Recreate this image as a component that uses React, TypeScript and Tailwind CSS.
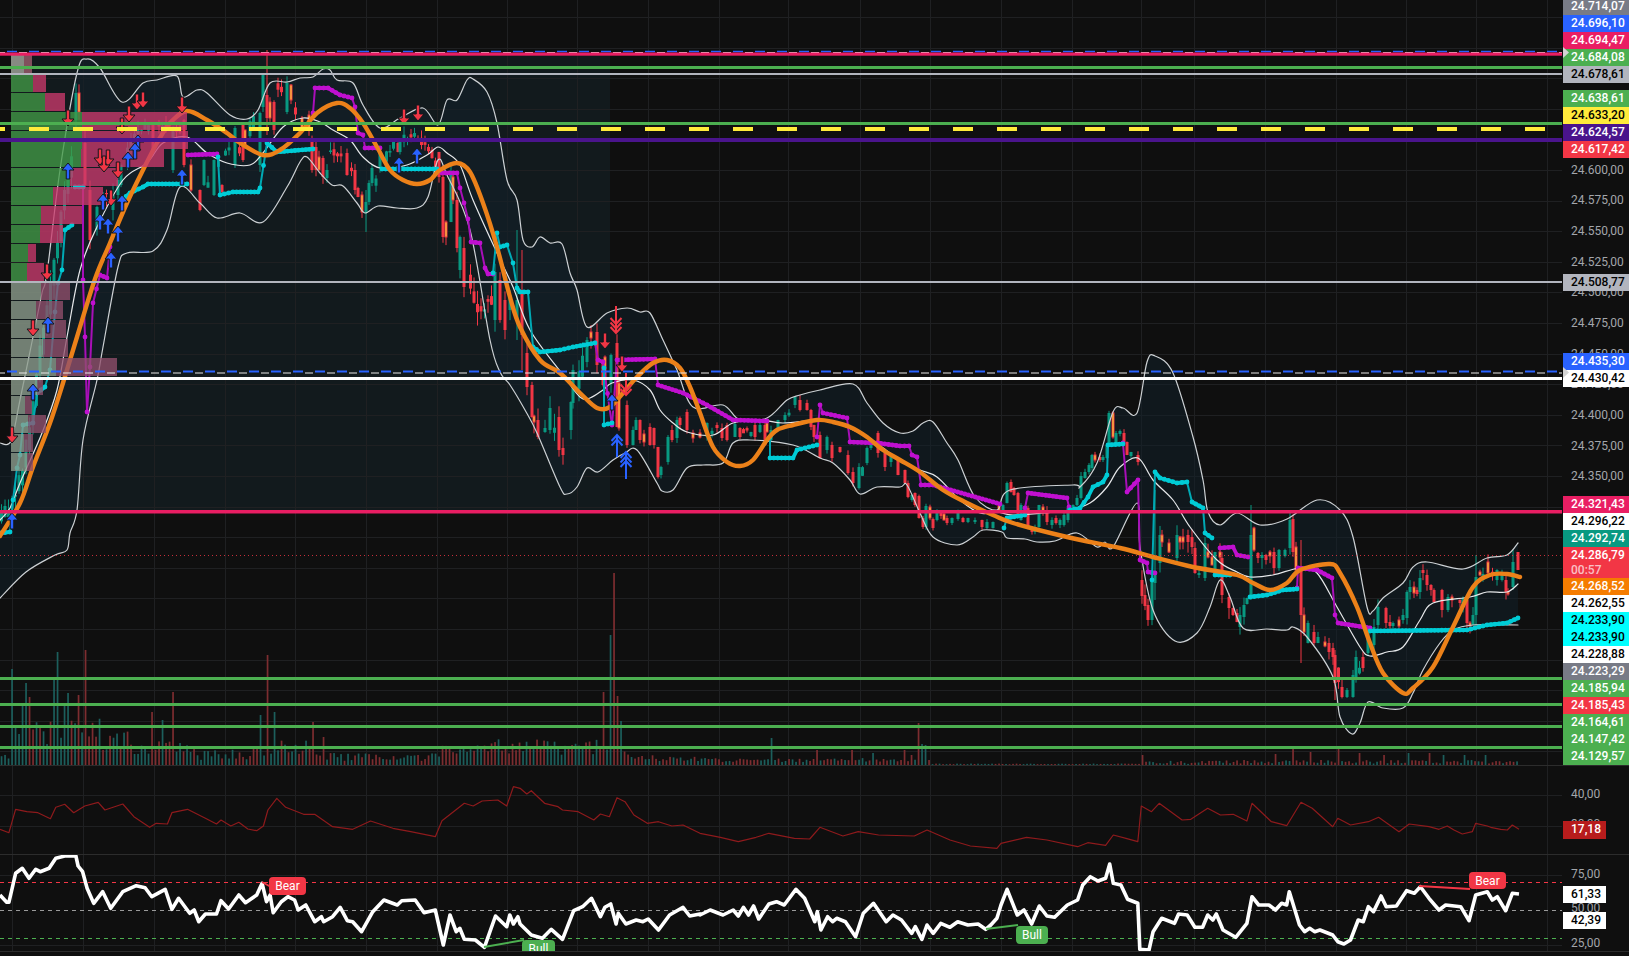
import React from "react";

type P = number[];

// seeded noise so the candles stay the same on every render
let seed = 42;
const rnd = () => {
  seed = (seed * 1664525 + 1013904223) % 4294967296;
  return seed / 4294967296;
};

const smooth = (p: P[]) => {
  let d = `M${p[0][0]} ${p[0][1]}`;
  for (let i = 0; i < p.length - 1; i++) {
    const a = p[Math.max(i - 1, 0)], b = p[i], c = p[i + 1], e = p[Math.min(i + 2, p.length - 1)];
    d += `C${(b[0] + (c[0] - a[0]) / 6).toFixed(1)} ${(b[1] + (c[1] - a[1]) / 6).toFixed(1)} ${(c[0] - (e[0] - b[0]) / 6).toFixed(1)} ${(c[1] - (e[1] - b[1]) / 6).toFixed(1)} ${c[0]} ${c[1]}`;
  }
  return d;
};
const line = (p: P[]) => "M" + p.map((q) => `${q[0].toFixed(1)} ${q[1].toFixed(1)}`).join("L");

// one dot per bar along a step line, so steep legs stay thin
const barDots = (s: P[]) => {
  const out: P[] = [];
  for (let i = 0; i < s.length - 1; i++) {
    const [x1, y1] = s[i], [x2, y2] = s[i + 1];
    const n = Math.max(1, Math.floor((x2 - x1) / 3.5));
    for (let j = 0; j < n; j++) out.push([x1 + ((x2 - x1) * j) / n, y1 + ((y2 - y1) * j) / n]);
  }
  out.push(s[s.length - 1]);
  return out;
};

const orange: P[] = [[0,536],[20,503],[33,467],[50,423],[63,383],[77,337],[95,279],[110,243],[127,203],[143,170],[157,143],[170,123],[187,111],[207,120],[227,133],[240,143],[263,155],[280,150],[300,133],[317,113],[337,103],[350,108],[363,123],[377,147],[390,170],[403,180],[417,184],[430,180],[440,170],[457,163],[470,172],[483,203],[497,247],[510,297],[520,327],[540,360],[560,373],[580,393],[597,408],[610,407],[623,393],[637,377],[653,363],[667,360],[680,368],[690,387],[700,413],[713,447],[727,462],[740,466],[753,460],[767,440],[777,430],[793,425],[817,420],[833,422],[850,427],[867,437],[883,450],[900,460],[920,472],[943,490],[967,503],[993,515],[1013,523],[1067,537],[1120,548],[1153,557],[1193,567],[1237,575],[1253,583],[1270,590],[1287,583],[1300,570],[1330,564],[1340,573],[1357,607],[1370,643],[1383,673],[1403,693],[1413,688],[1433,667],[1453,627],[1473,587],[1490,575],[1507,574],[1520,577]];
const upper: P[] = [[0,443],[11,441],[20,400],[33,337],[42,293],[47,273],[60,170],[77,73],[87,59],[100,68],[122,102],[143,83],[157,80],[177,76],[183,97],[197,90],[207,93],[230,115],[247,119],[258,110],[270,83],[287,82],[300,78],[313,77],[323,69],[330,70],[337,80],[353,83],[363,105],[380,128],[400,118],[423,108],[438,125],[447,100],[457,100],[467,80],[473,79],[487,92],[497,123],[507,180],[517,200],[523,240],[532,247],[540,237],[550,243],[562,244],[570,273],[577,290],[587,327],[607,313],[627,308],[640,312],[650,313],[663,340],[677,370],[693,407],[723,405],[740,420],[767,418],[787,400],[800,395],[820,390],[853,384],[867,403],[883,423],[900,433],[913,431],[923,423],[933,422],[947,443],[958,460],[975,497],[997,510],[1010,490],[1073,485],[1080,487],[1097,463],[1113,412],[1123,408],[1137,413],[1147,362],[1155,356],[1173,373],[1193,437],[1203,480],[1208,512],[1220,525],[1237,513],[1260,525],[1287,519],[1317,500],[1340,510],[1353,537],[1367,607],[1373,611],[1383,598],[1403,583],[1413,567],[1427,562],[1463,569],[1487,558],[1507,555],[1518,543]];
const lower: P[] = [[0,598],[26,572],[55,555],[67,550],[70,533],[77,510],[83,440],[97,380],[103,347],[118,267],[127,253],[153,251],[167,230],[180,187],[200,203],[217,218],[240,213],[263,222],[287,187],[300,162],[307,157],[320,173],[332,185],[343,186],[357,203],[365,213],[378,206],[397,208],[417,208],[428,197],[438,160],[447,175],[470,230],[490,340],[500,372],[510,385],[525,410],[537,433],[560,487],[567,494],[577,487],[587,468],[598,472],[613,460],[625,453],[637,450],[657,483],[662,491],[673,490],[687,468],[703,465],[723,463],[733,443],[750,440],[793,445],[820,458],[833,463],[850,480],[860,494],[877,487],[900,487],[907,485],[920,513],[933,537],[957,545],[973,537],[983,530],[1002,532],[1007,538],[1025,539],[1037,542],[1055,541],[1077,533],[1097,547],[1105,542],[1113,547],[1137,503],[1140,547],[1153,610],[1175,641],[1197,633],[1210,607],[1220,580],[1230,597],[1243,628],[1267,629],[1287,630],[1293,627],[1307,637],[1333,677],[1340,717],[1352,734],[1360,723],[1368,702],[1383,708],[1403,708],[1413,693],[1423,670],[1440,643],[1453,630],[1473,625],[1518,625]];
const mid: P[] = [[0,520],[10,508],[20,483],[42,433],[57,390],[67,337],[80,270],[97,227],[123,180],[147,163],[163,143],[187,137],[207,153],[227,163],[250,165],[263,153],[283,127],[303,118],[320,122],[333,130],[350,140],[363,157],[380,168],[407,165],[427,155],[438,147],[447,153],[460,165],[473,200],[497,253],[513,287],[530,330],[563,375],[580,397],[590,398],[603,390],[612,383],[633,380],[650,390],[660,410],[673,423],[687,432],[713,435],[733,423],[760,420],[783,423],[817,420],[833,422],[867,437],[900,460],[920,470],[937,477],[960,500],[980,513],[997,512],[1013,515],[1043,513],[1070,510],[1090,503],[1107,487],[1120,467],[1138,458],[1153,480],[1173,500],[1190,527],[1217,560],[1237,572],[1250,577],[1273,575],[1300,568],[1317,573],[1337,607],[1360,647],[1370,656],[1387,652],[1403,647],[1420,620],[1433,603],[1470,597],[1487,592],[1507,592],[1518,584]];

const magenta: P[][] = [
  [[83,187],[83,280],[85,337],[87,412],[90,367],[93,303],[100,275],[107,278],[110,247]],
  [[188,155],[217,154]],
  [[313,113],[315,88],[328,88],[340,95],[352,98],[355,107],[358,133],[363,135],[365,148],[380,148]],
  [[442,173],[457,173],[460,188],[464,203],[468,219],[471,242],[480,243],[485,268],[488,274],[493,274]],
  [[595,343],[598,360],[603,362],[612,425],[617,360],[655,359],[658,385],[683,393],[707,405],[733,420],[767,421]],
  [[817,437],[820,405],[823,413],[847,418],[850,442],[877,443],[900,446],[909,446],[912,455],[917,457],[921,485],[933,485],[1000,504]],
  [[1025,508],[1028,493],[1067,498],[1069,507]],
  [[1123,443],[1127,492],[1138,480],[1140,560],[1147,563],[1148,572],[1155,573]],
  [[1220,548],[1233,547],[1237,555],[1248,557]],
  [[1297,588],[1298,568],[1317,570],[1332,578],[1335,615],[1338,623],[1370,628]],
];
const cyan: P[][] = [
  [[0,533],[10,532],[13,500],[17,468],[20,455],[23,425],[33,423],[37,393],[45,387],[50,370],[55,312],[58,283],[62,270],[65,230],[72,225]],
  [[75,187],[83,187]],
  [[122,200],[130,193],[143,187],[148,184],[187,184]],
  [[218,157],[220,195],[233,192],[258,192],[260,188],[267,143],[277,152],[313,149]],
  [[382,169],[437,169]],
  [[493,273],[497,233],[500,247],[507,245],[513,263],[517,288],[520,292],[528,292],[533,347],[540,352],[560,350],[573,347],[595,343]],
  [[604,368],[604,425],[612,423]],
  [[770,437],[770,458],[793,458],[797,450],[817,445]],
  [[1004,528],[1007,518],[1025,515]],
  [[1070,510],[1080,508],[1088,497],[1093,487],[1103,482],[1107,475],[1108,445],[1123,444]],
  [[1152,580],[1155,472],[1160,478],[1177,483],[1187,482],[1192,502],[1203,508],[1205,533],[1212,538]],
  [[1215,575],[1230,575]],
  [[1250,597],[1267,595],[1283,590],[1297,589]],
  [[1370,631],[1467,630],[1487,625],[1507,623],[1518,618]],
];

const pricePath: P[] = [[0,520],[12,500],[22,470],[30,420],[40,350],[50,290],[60,220],[70,160],[80,110],[88,150],[95,210],[105,190],[120,170],[135,130],[150,125],[165,125],[180,130],[188,160],[195,175],[205,185],[215,165],[225,150],[240,150],[255,110],[265,80],[280,90],[295,110],[310,135],[325,150],[340,155],[355,175],[365,205],[380,165],[395,140],[415,135],[430,150],[440,190],[450,230],[465,270],[475,310],[490,300],[517,307],[533,418],[543,433],[558,423],[563,453],[572,410],[583,353],[593,343],[603,373],[617,387],[625,423],[633,433],[647,433],[660,463],[670,447],[677,423],[690,433],[707,433],[727,430],[747,430],[767,427],[787,413],[800,398],[810,417],[820,450],[833,447],[850,467],[857,483],[867,453],[880,440],[887,467],[900,477],[910,487],[920,513],[930,517],[943,515],[967,518],[987,527],[1003,507],[1010,487],[1020,510],[1030,528],[1040,517],[1053,523],[1067,513],[1080,497],[1093,460],[1110,427],[1117,437],[1130,453],[1138,458],[1150,607],[1153,580],[1162,547],[1168,553],[1177,547],[1187,538],[1193,557],[1203,570],[1213,557],[1223,580],[1233,607],[1243,610],[1252,570],[1258,553],[1270,555],[1280,557],[1290,530],[1297,553],[1302,613],[1310,630],[1320,640],[1333,657],[1337,683],[1347,693],[1353,683],[1363,660],[1373,630],[1380,610],[1387,620],[1400,620],[1407,593],[1413,588],[1423,573],[1435,597],[1447,603],[1460,600],[1467,620],[1477,587],[1490,570],[1500,577],[1508,593],[1513,567],[1518,555]];

// x, body top, body bottom, kind (g green, r red, y yellow core), optional wick top / bottom
const big: (number | string)[][] = [
  [76,93,120,"g"],[79,93,112,"y"],[85,143,185,"r"],[90,190,240,"r"],[97,207,230,"g"],[113,195,210,"g"],[118,180,195,"g"],[121,165,185,"g"],[153,125,150,"r"],[173,128,170,"g"],[184,120,165,"r"],[191,165,190,"y"],[200,190,210,"r"],[204,160,185,"g"],[214,160,195,"g"],[222,185,192,"r"],[235,128,165,"g"],[243,125,160,"r"],[245,130,145,"y"],[260,113,165,"g"],[263,75,107,"g"],[267,95,118,"r",50,135],[270,102,118,"y"],[274,102,130,"r"],[291,85,100,"y"],[287,83,112,"g"],
  [302,118,130,"y"],[309,115,130,"y"],[312,142,170,"r"],[316,147,170,"r"],[319,157,170,"y"],[323,158,177,"r"],[327,170,178,"g"],[347,153,175,"r"],[355,170,190,"r"],[358,188,197,"r"],[362,195,212,"y"],[366,202,213,"g",190,232],[369,183,202,"g"],[372,168,183,"g"],[380,152,168,"g"],[398,143,152,"r"],[400,142,152,"g"],
  [439,152,177,"r"],[443,177,237,"r"],[446,222,237,"y"],[451,173,222,"g"],[453,177,200,"y"],[457,200,248,"r"],[460,237,270,"g"],[464,248,287,"r"],
  [495,272,320,"g"],[500,280,320,"r"],[505,300,330,"r"],[510,295,310,"g"],[517,300,320,"g",230,340],[522,290,335,"r",250,370],[527,353,387,"r"],[532,385,417,"r"],[538,420,437,"r"],[534,416,422,"y"],[545,428,432,"g"],[550,408,430,"g"],[559,417,450,"r"],[563,448,455,"r"],[571,402,430,"g"],[573,370,403,"g"],[587,340,362,"g"],[591,332,338,"y"],[597,332,365,"r"],[603,363,385,"r"],[605,357,383,"y"],[611,355,383,"g"],[617,343,427,"r"],[619,383,428,"y"],[627,405,445,"r"],[633,430,445,"g"],[636,420,430,"g"],[640,420,440,"r"],[644,434,442,"y"],[650,427,445,"r"],[654,428,445,"r"],[658,447,477,"r"],[661,467,475,"g"],[668,437,462,"g"],[672,430,440,"r"],[677,420,438,"g"],[680,418,425,"r"],[687,412,430,"r"],[693,433,438,"y"],[700,433,437,"y"],[707,423,437,"g"],[717,425,428,"r"],[722,428,438,"r"],[727,425,440,"r"],[735,424,437,"g"],[740,428,437,"r"],[751,432,436,"g"],[755,425,437,"r"],[760,425,432,"g"],[765,425,445,"r"],[767,423,432,"y"],[771,430,440,"g"],[778,420,430,"g"],[785,415,420,"g"],[795,397,405,"g"],[800,400,410,"r"],[807,403,410,"r"],[811,410,427,"r"],[814,425,437,"r"],[820,435,458,"r"],[827,437,450,"g"],[832,445,458,"r"],[840,447,452,"r"],[848,455,473,"r"],[853,472,483,"r"],[859,467,488,"g"],[867,448,463,"g"],[871,442,448,"g"],[878,433,453,"r"],[885,453,467,"r"],[891,455,462,"g"],[898,460,475,"r"],[905,470,483,"r"],[908,483,497,"r"],[912,495,500,"g"],[915,493,505,"r"],[919,496,518,"r"],[923,518,527,"r"],[926,506,527,"g"],[930,507,518,"y"],[933,519,528,"r"],[937,512,520,"g"],[941,512,516,"r"],[944,514,520,"y"],[947,518,523,"r"],[952,518,523,"g"],[958,512,519,"g"],[963,518,522,"r"],[968,518,522,"g"],[975,520,522,"g"],[982,520,527,"r"],[987,522,528,"g"],[993,522,528,"g"],[999,504,512,"y"],[1003,505,510,"g"],[1007,483,503,"g"],[1011,482,492,"r"],[1014,488,495,"r"],[1018,493,515,"r"],[1021,505,520,"g"],[1028,508,527,"r"],[1032,528,532,"r"],[1035,527,532,"g"],[1039,505,527,"g"],[1043,507,512,"y"],[1047,510,522,"r"],[1052,520,525,"g"],[1056,518,523,"r"],[1060,520,525,"g"],[1064,515,525,"g"],[1068,508,520,"g"],[1073,505,510,"g"],[1077,498,505,"g"],[1081,476,498,"g"],[1085,472,478,"g"],[1089,465,472,"g"],[1092,455,468,"g"],[1095,455,460,"y"],[1100,457,460,"r"],[1103,457,460,"g"],[1107,445,458,"g"],[1109,413,443,"g"],[1113,413,437,"y"],[1116,433,443,"g"],[1120,431,434,"g"],[1124,433,442,"r"],[1127,442,455,"r"],[1131,452,456,"g"],[1138,455,462,"r"],
  [1142,580,596,"r"],[1145,595,606,"r"],[1148,605,620,"r"],[1152,580,620,"g"],[1155,573,583,"g",490,600],[1160,535,563,"g"],[1162,535,542,"y"],[1169,543,552,"y"],[1177,535,558,"g"],[1180,537,542,"y"],[1183,537,542,"y"],[1188,535,542,"r"],[1192,537,547,"r"],[1195,548,573,"r"],[1199,573,575,"g"],[1205,543,578,"g"],[1208,552,557,"y"],[1212,557,565,"y"],[1215,552,570,"g"],[1220,552,557,"y"],[1222,558,595,"r"],[1229,597,608,"r"],[1233,608,615,"r"],[1237,613,622,"r"],[1240,615,627,"g"],[1244,605,617,"g"],[1247,598,604,"g"],[1251,535,596,"g",505,600],[1254,528,550,"y"],[1258,553,558,"r"],[1262,555,558,"g"],[1266,555,560,"r"],[1270,552,556,"y"],[1274,552,568,"r"],[1279,550,568,"g"],[1285,550,556,"g"],[1290,520,548,"g"],[1293,519,552,"r"],[1296,547,570,"y"],[1301,570,615,"r",540,663],[1304,615,632,"y"],[1308,623,643,"g"],[1314,632,643,"r"],[1318,637,643,"g"],[1325,642,646,"y"],[1329,643,652,"r"],[1333,648,657,"r"],[1335,655,683,"r",650,700],[1342,687,697,"r"],[1347,690,697,"g"],[1353,675,697,"g"],[1356,657,677,"g"],[1363,657,668,"r"],[1368,632,653,"g"],[1374,627,645,"g"],[1378,607,625,"g"],[1386,608,623,"r"],[1390,622,626,"r"],[1393,623,626,"g"],[1399,620,626,"y"],[1403,615,620,"g"],[1407,592,618,"g"],[1410,587,592,"g"],[1414,587,593,"y"],[1417,590,594,"r"],[1420,578,592,"g"],[1423,570,573,"r"],[1427,575,585,"r"],[1431,585,590,"r"],[1434,590,602,"r"],[1442,590,610,"r"],[1448,597,610,"g"],[1452,597,600,"y"],[1460,600,603,"r"],[1463,598,606,"g"],[1467,600,623,"r"],[1470,623,626,"y"],[1473,615,625,"g"],[1476,577,615,"g",555,625],[1480,572,575,"y"],[1483,574,580,"g"],[1488,562,573,"y"],[1497,570,580,"g"],[1502,573,580,"g"],[1506,580,592,"r"],[1508,592,594,"y"],[1513,562,587,"g",550,590],[1518,552,570,"r",552,568],
];

const at = (x: number) => {
  for (let i = 0; i < pricePath.length - 1; i++) {
    if (x <= pricePath[i + 1][0]) {
      const a = pricePath[i], b = pricePath[i + 1];
      return a[1] + ((b[1] - a[1]) * (x - a[0])) / (b[0] - a[0]);
    }
  }
  return pricePath[pricePath.length - 1][1];
};
const amp = (x: number) => (x < 130 ? 12 : x < 440 ? 7 : x < 620 ? 12 : x < 900 ? 5 : x < 1040 ? 3 : x < 1140 ? 4 : x < 1300 ? 11 : 8);

type Candle = { x: number; t: number; b: number; k: string; wt: number; wb: number };
const candles: Candle[] = [];
const bigXs = big.map((b) => b[0] as number);
for (let i = 0; i < 434; i++) {
  const x = 1.5 + i * 3.5;
  const a = amp(x);
  const o = at(x - 3.5) + (rnd() - 0.5) * a;
  const c = at(x) + (rnd() - 0.5) * a;
  const wt = Math.min(o, c) - rnd() * a * 1.2;
  const wb = Math.max(o, c) + rnd() * a * 1.2;
  if (x > 1141 && x < 1151) continue;
  if (bigXs.some((m) => Math.abs(m - x) < 3.2)) continue;
  candles.push({ x, t: Math.min(o, c), b: Math.max(o, c) + 1, k: c < o ? "g" : "r", wt, wb });
}
big.forEach((b) => {
  const [x, t, bo, k, w1, w2] = b as [number, number, number, string, number?, number?];
  const a = amp(x);
  candles.push({ x, t, b: bo, k, wt: w1 ?? t - rnd() * a, wb: w2 ?? bo + rnd() * a });
});

// volume pane: bars every 3.5px, spikes read from the picture
const spikes: [number, number, string][] = [[12,96,"g"],[22,60,"g"],[26,82,"g"],[29,68,"r"],[58,113,"g"],[54,85,"g"],[68,72,"g"],[65,62,"g"],[87,115,"r"],[80,70,"r"],[172,73,"r"],[153,53,"r"],[164,45,"g"],[267,110,"r"],[262,50,"g"],[276,53,"g"],[312,43,"r"],[322,28,"r"],[605,73,"r"],[609,130,"g"],[613,192,"r"],[618,69,"r"],[620,44,"g"],[770,27,"g"],[818,15,"r"],[852,15,"r"],[872,12,"g"],[904,15,"r"],[912,10,"r"],[918,42,"r"],[922,21,"g"],[926,20,"g"],[1141,10,"r"],[1275,11,"r"],[1292,16,"r"],[1311,13,"r"],[1338,16,"r"],[1360,12,"r"],[1385,10,"r"],[1410,12,"g"],[1431,12,"r"],[1444,10,"g"],[1465,10,"g"],[1486,10,"g"]];
const volEnv = (x: number): [number, number] => {
  if (x < 10) return [6, 12];
  if (x < 100) return [20, 55];
  if (x < 130) return [15, 40];
  if (x < 195) return [10, 30];
  if (x < 250) return [5, 22];
  if (x < 320) return [8, 30];
  if (x < 440) return [4, 14];
  if (x < 600) return [10, 30];
  if (x < 630) return [10, 22];
  if (x < 700) return [4, 12];
  if (x < 930) return [3, 8];
  if (x < 1140) return [0.8, 1.6];
  if (x < 1200) return [1, 5];
  return [1.5, 6];
};
const volumes: { x: number; h: number; k: string }[] = [];
for (let i = 0; i < 434; i++) {
  const x = 1.5 + i * 3.5;
  const [lo, hi] = volEnv(x);
  const s = spikes.find((q) => Math.abs(q[0] - x) <= 1.75);
  volumes.push(s ? { x, h: s[1], k: s[2] } : { x, h: lo + rnd() * (hi - lo) * 0.8, k: rnd() > 0.5 ? "g" : "r" });
}

const z8 = (a: number[][]): P[] => a.map(([x, y]) => [x / 2.24, 620 + y / 3]);
const z9 = (a: number[][]): P[] => a.map(([x, y]) => [x / 1.96 + 700, 620 + y / 3]);
const z3 = (a: number[][]): P[] => a.map(([x, y]) => [x / 3 + 1429, 640 + y / 3]);

const adx: P[] = [
  ...z8([[0,628],[20,638],[35,568],[60,575],[85,578],[113,596],[125,562],[145,553],[165,578],[190,558],[220,547],[235,570],[275,552],[300,590],[335,622],[350,610],[375,612],[385,578],[420,568],[460,595],[485,612],[495,600],[517,618],[535,607],[555,627],[575,632],[590,618],[600,570],[620,535],[640,562],[680,583],[705,583],[745,620],[790,628],[830,603],[880,625],[920,635],[975,650],[990,602],[1040,550],[1060,558],[1080,543],[1115,540],[1135,558],[1150,500],[1165,505],[1180,522],[1190,512],[1220,550],[1250,560],[1260,570],[1295,575],[1330,600],[1345,582],[1365,590],[1382,533],[1400,545],[1420,585],[1450,610],[1475,605],[1505,618],[1530,615],[1568,640]]),
  ...z9([[0,640],[40,652],[75,665],[110,652],[135,640],[185,655],[215,657],[235,622],[280,648],[310,635],[350,645],[420,648],[445,630],[490,660],[530,678],[582,685],[590,670],[640,652],[680,660],[740,680],[760,668],[795,676],[810,645],[835,655],[858,665],[865,558],[885,575],[900,550],[945,600],[962,598],[995,565],[1020,585],[1045,583],[1072,603],[1082,550],[1120,605],[1150,617],[1178,547],[1200,565],[1240,620],[1250,595],[1275,615],[1310,605],[1330,592],[1370,635],[1390,612]]),
  ...z3([[0,560],[30,568],[55,558],[75,570],[100,582],[130,575],[140,550],[175,558],[185,562],[215,568],[235,570],[250,555],[270,568]]),
];
const rsi: P[] = [
  ...z8([[0,825],[15,847],[20,847],[35,760],[50,745],[65,775],[80,748],[90,755],[110,745],[125,715],[145,708],[170,708],[175,738],[185,755],[195,805],[210,850],[230,815],[248,865],[275,815],[305,797],[325,803],[340,830],[370,808],[385,868],[400,835],[425,880],[435,870],[445,905],[460,882],[485,882],[495,842],[512,867],[535,825],[550,848],[575,825],[587,790],[597,845],[605,825],[612,878],[630,845],[645,830],[660,840],[668,870],[685,855],[705,905],[720,890],[725,905],[745,890],[762,862],[778,902],[790,905],[810,935],[835,875],[860,840],[890,855],[900,842],[930,840],[950,878],[975,870],[993,975],[1008,885],[1022,935],[1030,925],[1040,958],[1065,960],[1085,982],[1110,888],[1135,920],[1142,885],[1150,912],[1160,890],[1165,912],[1190,945],[1215,955],[1235,928],[1260,958],[1285,872],[1305,860],[1325,835],[1345,890],[1355,862],[1368,852],[1380,912],[1385,880],[1402,912],[1425,900],[1440,905],[1452,897],[1475,930],[1500,885],[1530,862],[1545,888],[1568,882]]),
  ...z9([[0,885],[20,870],[45,885],[65,870],[75,888],[85,862],[95,885],[105,858],[115,897],[135,852],[150,845],[165,855],[188,808],[205,835],[225,905],[230,875],[237,930],[250,890],[260,905],[268,895],[285,905],[305,950],[320,880],[340,850],[365,905],[378,885],[395,900],[415,940],[422,920],[435,958],[445,915],[457,940],[472,910],[490,922],[505,905],[525,915],[545,912],[560,928],[570,915],[582,895],[590,855],[602,808],[622,885],[635,870],[650,912],[665,858],[680,888],[695,892],[720,855],[740,840],[750,795],[765,770],[780,783],[795,775],[803,732],[810,790],[825,795],[838,838],[858,850],[862,988],[880,990],[888,935],[905,895],[930,910],[938,882],[955,885],[970,922],[985,922],[995,885],[1005,900],[1012,882],[1025,930],[1050,952],[1072,910],[1082,830],[1095,855],[1115,855],[1128,870],[1140,850],[1150,855],[1155,815],[1175,915],[1185,935],[1195,925],[1205,935],[1215,930],[1240,945],[1250,965],[1262,972],[1275,960],[1290,900],[1300,905],[1310,860],[1320,875],[1335,828],[1345,860],[1365,858],[1385,812],[1400,820],[1412,800]]),
  ...z3([[0,775],[30,810],[50,795],[95,800],[120,842],[140,765],[175,755],[190,780],[205,770],[230,812],[250,760],[270,762]]),
];

const gridX = [12,83,154,225,295,366,437,507,577,648,719,788,860,930,1001,1072,1141,1194,1265,1336,1406,1476,1547];
const gridY: number[] = [];
for (let i = 0; i < 25; i++) gridY.push(17 + i * 30.6);

// volume profile rows: top, green end, pink end, tint
const profile: [number, number, number, number][] = [
  [55,24,32,2],[74,33,46,0],[93,45,65,0],[112,82,187,0],[131,82,188,0],[149,81,164,0],[168,70,118,0],[187,53,103,0],[206,41,82,0],[225,40,63,0],[244,28,36,0],[263,27,44,0],
  [282,41,70,1],[301,36,63,1],[320,45,66,1],[339,43,68,1],[358,56,117,1],[377,37,43,1],[396,25,32,1],[415,28,46,1],[434,24,33,1],[453,27,33,1],
];

const Down = ({ x, y }: { x: number; y: number }) => (
  <path d={`M${x - 1.75} ${y - 16}h3.5v9h4.25l-6 7l-6 -7h4.25z`} fill="#f23645" stroke="#15171c" strokeWidth="1" />
);
const Up = ({ x, y }: { x: number; y: number }) => (
  <path d={`M${x - 1.75} ${y + 16}h3.5v-9h4.25l-6 -7l-6 7h4.25z`} fill="#2962ff" stroke="#15171c" strokeWidth="1" />
);
const Multi = ({ x, y, n, up }: { x: number; y: number; n: number; up?: boolean }) => {
  const c = up ? "#2962ff" : "#f23645";
  const dir = up ? 1 : -1;
  return (
    <g fill="none" stroke={c} strokeWidth="2">
      <path d={`M${x} ${y + dir * (n * 5 + 12)}V${y}`} />
      {Array.from({ length: n }).map((_, i) => (
        <path key={i} d={`M${x - 5.5} ${y + dir * (i * 4.5 + 6)}L${x} ${y + dir * (i * 4.5)}L${x + 5.5} ${y + dir * (i * 4.5 + 6)}`} />
      ))}
    </g>
  );
};

const reds = [[47,280],[122,134],[129,122],[137,110],[143,108],[68,126],[182,113],[100,165],[108,166],[104,172],[118,178],[111,206],[33,336],[12,443],[404,125],[418,121],[605,349],[622,372]];
const blues = [[68,163],[138,135],[135,143],[128,152],[182,169],[103,194],[122,195],[100,214],[108,218],[118,226],[111,252],[48,317],[33,384],[12,513],[399,157],[417,148],[612,394]];

const candleColor = (k: string) => (k === "g" ? "#089981" : "#f23645");

function Grid({ ys }: { ys: number[] }) {
  return (
    <g stroke="#1f2022" strokeWidth="1">
      {gridX.map((x) => <line key={x} x1={x + 0.5} x2={x + 0.5} y1="0" y2="956" />)}
      {ys.map((y) => <line key={y} x1="0" x2="1562" y1={Math.round(y) + 0.5} y2={Math.round(y) + 0.5} />)}
    </g>
  );
}

function StepLine({ s, stroke, dot }: { s: P[]; stroke: string; dot: string }) {
  return (
    <g>
      {s.slice(1).map((q, i) => {
        const steep = Math.abs(q[1] - s[i][1]) > 2.5 * Math.abs(q[0] - s[i][0]);
        return (
          <path key={i} d={line([s[i], q])} stroke={steep ? stroke : dot} strokeWidth={steep ? 2 : 3.8} />
        );
      })}
      {barDots(s).map(([x, y], i) => <circle key={i} cx={x} cy={y} r="2.4" fill={dot} />)}
    </g>
  );
}

function MainChart() {
  return (
    <svg className="block" width="1562" height="765" viewBox="0 0 1562 765">
      <rect x="11" y="54" width="599" height="457" fill="#121a1d" />
      <Grid ys={gridY} />
      <path d={smooth(upper) + "L" + smooth([...lower].reverse()).slice(1) + "Z"} fill="#122029" fillOpacity="0.55" />

      {volumes.map((v, i) => (
        <rect key={i} x={v.x - 0.8} y={765 - v.h} width="1.7" height={v.h} fill={v.k === "g" ? "#1c5f5c" : "#7d2d30"} />
      ))}

      {candles.map((c, i) => (
        <g key={i}>
          <line x1={c.x} x2={c.x} y1={c.wt} y2={c.wb} stroke={candleColor(c.k === "y" ? "r" : c.k)} strokeWidth="1" />
          {c.k === "y" ? (
            <rect x={c.x - 1} y={c.t} width="2" height={c.b - c.t} fill="#ffeb3b" stroke="#f23645" strokeWidth="1" />
          ) : (
            <rect x={c.x - 1.5} y={c.t} width="3" height={c.b - c.t} fill={candleColor(c.k)} />
          )}
        </g>
      ))}

      <g fill="none" strokeLinejoin="round" strokeLinecap="round">
        <path d={smooth(upper)} stroke="#cdd1d4" strokeWidth="1.2" />
        <path d={smooth(lower)} stroke="#cdd1d4" strokeWidth="1.2" />
        <path d={smooth(mid)} stroke="#e6e8ea" strokeWidth="1.2" />
        {magenta.map((s, i) => <StepLine key={i} s={s} stroke="#a80fb8" dot="#c010d0" />)}
        {cyan.map((s, i) => <StepLine key={i} s={s} stroke="#00a9b4" dot="#00ccd6" />)}
        <path d={smooth(orange)} stroke="#ec8119" strokeWidth="4.4" />
      </g>

      <g fillOpacity="0.78">
        {profile.map(([t, g, p, tint]) => (
          <g key={t}>
            <rect x="11" y={t} width={g - 11} height="18" fill={tint === 0 ? "#419a47" : tint === 1 ? "#8d9c8c" : "#a7aa9f"} />
            <rect x={g} y={t} width={p - g} height="18" fill={tint === 0 ? "#c93a6b" : tint === 1 ? "#914f6b" : "#a0606f"} />
          </g>
        ))}
      </g>

      {reds.map(([x, y], i) => <Down key={i} x={x} y={y} />)}
      {blues.map(([x, y], i) => <Up key={i} x={x} y={y} />)}
      <Multi x={616} y={333} n={3} />
      <Multi x={626} y={395} n={2} />
      <Multi x={617} y={435} n={2} up />
      <Multi x={626} y={452} n={3} up />

      <line x1="0" x2="1562" y1="51.5" y2="51.5" stroke="#2962ff" strokeWidth="1.5" strokeDasharray="10 12" strokeDashoffset="-7" />
      <line x1="0" x2="1562" y1="52.5" y2="52.5" stroke="#e8e8e8" strokeWidth="1" strokeDasharray="8 14" strokeDashoffset="-19" />
      <rect x="0" y="52.5" width="1562" height="3.2" fill="#e91e63" />
      <rect x="0" y="66" width="1562" height="3" fill="#4caf50" />
      <rect x="0" y="73" width="1562" height="2" fill="#b2b5be" />
      <rect x="0" y="122" width="1562" height="3" fill="#4caf50" />
      <line x1="0" x2="1562" y1="129" y2="129" stroke="#ffeb3b" strokeWidth="4" strokeDasharray="20 24" strokeDashoffset="-29" />
      <rect x="0" y="138" width="1562" height="4" fill="#4a148c" />
      <rect x="0" y="281" width="1562" height="2" fill="#b2b5be" />
      <line x1="0" x2="1562" y1="371.5" y2="371.5" stroke="#2962ff" strokeWidth="2" strokeDasharray="10 12" strokeDashoffset="-7" />
      <line x1="0" x2="1562" y1="373" y2="373" stroke="#e8e8e8" strokeWidth="1" strokeDasharray="8 14" strokeDashoffset="-19" />
      <rect x="0" y="377" width="1562" height="3" fill="#ffffff" />
      <rect x="0" y="510" width="1562" height="3.5" fill="#e91e63" />
      <line x1="0" x2="1562" y1="555.5" y2="555.5" stroke="#f23645" strokeWidth="1" strokeDasharray="1 3" strokeOpacity="0.8" />
      <rect x="0" y="677" width="1562" height="3" fill="#4caf50" />
      <rect x="0" y="703" width="1562" height="3" fill="#4caf50" />
      <rect x="0" y="725" width="1562" height="3" fill="#4caf50" />
      <rect x="0" y="746" width="1562" height="3" fill="#4caf50" />
    </svg>
  );
}

function Tick({ text, className }: { text: string; className: string }) {
  return <div className={`h-[17px] pl-2 leading-[17px] text-[#a3a6ab] ${className}`}>{text}</div>;
}
function Tag({ text, className }: { text: string; className: string }) {
  return <div className={`relative z-10 h-[17px] pl-2 leading-[17px] font-medium ${className}`}>{text}</div>;
}

export default function App() {
  return (
    <div className="h-[956px] w-[1629px] overflow-hidden bg-[#0f0f0f] text-[12px] [font-family:Roboto,sans-serif]">
      {/* price pane */}
      <div className="flex h-[766px] border-b border-[#2c2c2c]">
        <MainChart />
        <div className="relative ml-px w-[66px]">
          <Tag text="24.714,07" className="!h-[15px] !leading-[12px] bg-[#787b86] text-white" />
          <Tag text="24.696,10" className="bg-[#2962ff] text-white" />
          <Tag text="24.694,47" className="bg-[#e91e63] text-white" />
          <Tag text="24.684,08" className="bg-[#4caf50] text-white" />
          <Tag text="24.678,61" className="bg-[#b2b5be] text-black" />
          <Tag text="24.638,61" className="mt-[7px] bg-[#4caf50] text-white" />
          <Tag text="24.633,20" className="bg-[#ffeb3b] text-black" />
          <Tag text="24.624,57" className="bg-[#4a148c] text-white" />
          <Tag text="24.617,42" className="bg-[#f23645] text-white" />
          <Tick text="24.600,00" className="mt-[4px]" />
          <Tick text="24.575,00" className="mt-[13px]" />
          <Tick text="24.550,00" className="mt-[14px]" />
          <Tick text="24.525,00" className="mt-[14px]" />
          <Tag text="24.508,77" className="mt-[3px] bg-[#b2b5be] text-black" />
          <Tick text="24.500,00" className="-mt-[7px]" />
          <Tick text="24.475,00" className="mt-[14px]" />
          <Tick text="24.450,00" className="mt-[14px]" />
          <Tag text="24.435,30" className="-mt-[10px] bg-[#2962ff] text-white" />
          <Tag text="24.430,42" className="bg-white text-black" />
          <Tick text="24.425,00" className="-mt-[11px]" />
          <Tick text="24.400,00" className="mt-[14px]" />
          <Tick text="24.375,00" className="mt-[14px]" />
          <Tick text="24.350,00" className="mt-[13px]" />
          <Tag text="24.321,43" className="mt-[11px] bg-[#e91e63] text-white" />
          <Tag text="24.296,22" className="bg-white text-black" />
          <Tag text="24.292,74" className="bg-[#089981] text-white" />
          <div className="h-[31px] bg-[#f23645] pl-2 pt-px font-medium leading-[15px] text-white">
            <div>24.286,79</div>
            <div className="text-white/70">00:57</div>
          </div>
          <Tag text="24.268,52" className="bg-[#f57c00] text-white" />
          <Tag text="24.262,55" className="bg-white text-black" />
          <Tag text="24.233,90" className="bg-[#00ffff] text-black" />
          <Tag text="24.233,90" className="bg-[#00ffff] text-black" />
          <Tag text="24.228,88" className="bg-white text-black" />
          <Tag text="24.223,29" className="bg-[#787b86] text-white" />
          <Tag text="24.185,94" className="bg-[#4caf50] text-white" />
          <Tag text="24.185,43" className="bg-[#f23645] text-white" />
          <Tag text="24.164,61" className="bg-[#4caf50] text-white" />
          <Tag text="24.147,42" className="bg-[#4caf50] text-white" />
          <Tag text="24.129,57" className="bg-[#4caf50] text-white" />
          <svg className="absolute left-0 top-[47px] z-20" width="7" height="11" viewBox="0 0 7 11"><path d="M0 0L6 5.5L0 11Z" fill="#d4d4d4" /></svg>
          <svg className="absolute left-0 top-[367px] z-20" width="7" height="11" viewBox="0 0 7 11"><path d="M0 0L6 5.5L0 11Z" fill="#d4d4d4" /></svg>
        </div>
      </div>

      {/* adx pane */}
      <div className="flex h-[89px] border-b border-[#2c2c2c]">
        <svg className="block" width="1562" height="88" viewBox="0 766 1562 88">
          <Grid ys={[795, 826]} />
          <path d={line(adx)} fill="none" stroke="#8e1a1c" strokeWidth="1.2" strokeLinejoin="round" />
        </svg>
        <div className="ml-px w-[66px]">
          <Tick text="40,00" className="mt-[20px]" />
          <Tick text="30,00" className="mt-[13px]" />
          <Tag text="17,18" className="-mt-[12px] !h-[18px] w-[43px] bg-[#b71c1c] text-white" />
        </div>
      </div>

      {/* rsi pane */}
      <div className="flex h-[97px] border-b border-[#2c2c2c]">
        <div className="relative h-[96px] w-[1562px] overflow-hidden">
          <svg className="block" width="1562" height="96" viewBox="0 855 1562 96">
            <Grid ys={[875, 945]} />
            <g strokeWidth="1" strokeDasharray="4 4">
              <line x1="0" x2="1562" y1="882.5" y2="882.5" stroke="#f23645" />
              <line x1="0" x2="1562" y1="910.5" y2="910.5" stroke="#9a9a9a" />
              <line x1="0" x2="1562" y1="938.5" y2="938.5" stroke="#4caf50" />
            </g>
            <path d={line(rsi)} fill="none" stroke="#ffffff" strokeWidth="3.6" strokeLinejoin="round" />
            <g strokeWidth="2">
              <line x1="262" y1="882" x2="271" y2="887" stroke="#f23645" />
              <line x1="484" y1="947" x2="524" y2="940" stroke="#4caf50" />
              <line x1="986" y1="929" x2="1018" y2="925" stroke="#4caf50" />
              <line x1="1419" y1="886" x2="1470" y2="889" stroke="#f23645" />
            </g>
          </svg>
          <div className="absolute left-[269px] top-[22px] flex h-[18px] w-[37px] items-center justify-center rounded-sm bg-[#f23645] text-white">Bear</div>
          <div className="absolute left-[522px] top-[85px] flex h-[18px] w-[33px] items-center justify-center rounded-sm bg-[#4caf50] text-white">Bull</div>
          <div className="absolute left-[1016px] top-[71px] flex h-[18px] w-[32px] items-center justify-center rounded-sm bg-[#4caf50] text-white">Bull</div>
          <div className="absolute left-[1469px] top-[17px] flex h-[17px] w-[37px] items-center justify-center rounded-sm bg-[#f23645] text-white">Bear</div>
        </div>
        <div className="ml-px w-[66px]">
          <Tick text="75,00" className="mt-[11px]" />
          <Tag text="61,33" className="mt-[3px] w-[43px] bg-white text-black" />
          <Tick text="50,00" className="-mt-[3px]" />
          <Tag text="42,39" className="-mt-[5px] w-[43px] bg-white text-black" />
          <Tick text="25,00" className="mt-[6px]" />
        </div>
      </div>
    </div>
  );
}
